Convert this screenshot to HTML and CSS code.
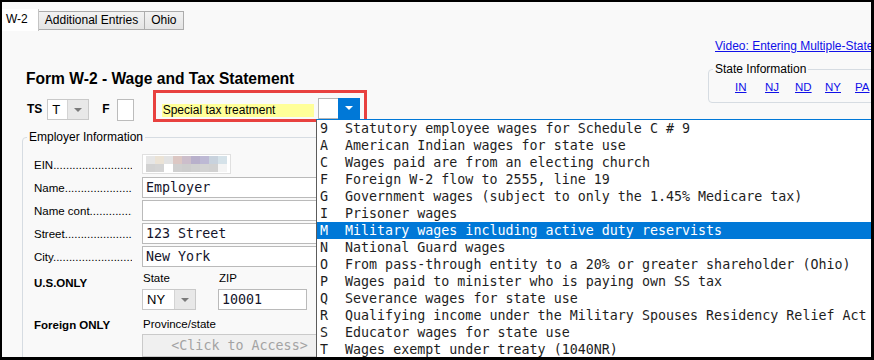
FILE: index.html
```html
<!DOCTYPE html>
<html lang="en">
<head>
  <meta charset="UTF-8" />
  <title>Form W-2 - Wage and Tax Statement</title>
  <link rel="stylesheet" href="styles.css">
</head>
<body>

  <div class="app">

    <div class="tabs">
      <div class="tab active">W-2</div>
      <div class="tab">Additional Entries</div>
      <div class="tab">Ohio</div>
    </div>

    <div class="main">
      <div class="left">
        <h1>Form W-2 - Wage and Tax Statement</h1>

        <div class="ts-row">
          <span class="bold-label">TS</span>
          <div class="select ts-select"><span class="val">T</span><span class="arrow"></span></div>
          <span class="bold-label f-label">F</span>
          <div class="f-box"></div>
          <div class="highlight">
            <span class="yellow">Special tax treatment</span>
            <div class="combo"><span class="combo-val"></span><span class="combo-btn"></span></div>
          </div>
        </div>

        <fieldset class="group employer">
          <legend>Employer Information</legend>

          <div class="row">
            <span class="lbl">EIN</span>
            <div class="ein">
              <i style="background:#e6e6e6"></i><i style="background:#ebe3d6"></i><i style="background:#e3e3e3"></i><i style="background:#dcc7c3"></i><i style="background:#ccbecb"></i><i style="background:#b8b0cb"></i><i style="background:#bdb9d4"></i><i style="background:#c8d2dd"></i><i style="background:#d5e2e9"></i>
              <i style="background:#d2d2d2"></i><i style="background:#d4d4d4"></i><i style="background:#ffffff"></i><i style="background:#cfcfcf"></i><i style="background:#cdcdcd"></i><i style="background:#d0d0d0"></i><i style="background:#d3d3d3"></i><i style="background:#d1d1d1"></i><i style="background:#f4f4f4"></i>
            </div>
          </div>
          <div class="row">
            <span class="lbl">Name</span>
            <div class="field">Employer</div>
          </div>
          <div class="row">
            <span class="lbl">Name cont</span>
            <div class="field"></div>
          </div>
          <div class="row">
            <span class="lbl">Street</span>
            <div class="field">123 Street</div>
          </div>
          <div class="row">
            <span class="lbl">City</span>
            <div class="field">New York</div>
          </div>

          <div class="us-row">
            <span class="bold-label section-label">U.S.ONLY</span>
            <div class="sub state-col">
              <span class="sub-label">State</span>
              <div class="select state-select"><span class="val">NY</span><span class="arrow"></span></div>
            </div>
            <div class="sub">
              <span class="sub-label">ZIP</span>
              <div class="field zip">10001</div>
            </div>
          </div>

          <div class="foreign-row">
            <span class="bold-label section-label">Foreign ONLY</span>
            <div class="sub">
              <span class="sub-label">Province/state</span>
              <div class="click-box">&lt;Click to Access&gt;</div>
            </div>
          </div>
        </fieldset>
      </div>

      <div class="right">
        <a class="video" href="#">Video: Entering Multiple-State Returns</a>
        <fieldset class="group states">
          <legend>State Information</legend>
          <div class="state-links">
            <a href="#">IN</a>
            <a href="#">NJ</a>
            <a href="#">ND</a>
            <a href="#">NY</a>
            <a href="#">PA</a>
          </div>
        </fieldset>
      </div>
    </div>

    <ul class="dropdown">
      <li><span class="code">9</span><span>Statutory employee wages for Schedule C # 9</span></li>
      <li><span class="code">A</span><span>American Indian wages for state use</span></li>
      <li><span class="code">C</span><span>Wages paid are from an electing church</span></li>
      <li><span class="code">F</span><span>Foreign W-2 flow to 2555, line 19</span></li>
      <li><span class="code">G</span><span>Government wages (subject to only the 1.45% Medicare tax)</span></li>
      <li><span class="code">I</span><span>Prisoner wages</span></li>
      <li class="selected"><span class="code">M</span><span>Military wages including active duty reservists</span></li>
      <li><span class="code">N</span><span>National Guard wages</span></li>
      <li><span class="code">O</span><span>From pass-through entity to a 20% or greater shareholder (Ohio)</span></li>
      <li><span class="code">P</span><span>Wages paid to minister who is paying own SS tax</span></li>
      <li><span class="code">Q</span><span>Severance wages for state use</span></li>
      <li><span class="code">R</span><span>Qualifying income under the Military Spouses Residency Relief Act</span></li>
      <li><span class="code">S</span><span>Educator wages for state use</span></li>
      <li><span class="code">T</span><span>Wages exempt under treaty (1040NR)</span></li>
    </ul>

  </div>

</body>
</html>
```

FILE: styles.css
```css
body {
  margin: 0;
  background: #000;
  height: 360px;
  overflow: hidden;
}

.app {
  position: relative;
  width: 869px;
  height: 355px;
  margin: 2px 3px 3px 2px;
  overflow: hidden;
  background: #f9f9f9;
  font-family: "Liberation Sans", Arial, sans-serif;
  font-size: 12px;
  color: #000;
}

/* tabs */

.tabs {
  display: flex;
  align-items: flex-end;
  height: 29px;
}

.tab {
  height: 17px;
  line-height: 17px;
  padding: 0 6px;
  margin-bottom: 1px;
  border: 1px solid #acacac;
  border-left: none;
  background: linear-gradient(#f2f2f2, #e4e4e4);
}

.tab.active {
  height: 22px;
  line-height: 20px;
  padding: 0 10px 0 4px;
  margin-bottom: 0;
  border: none;
  border-right: 1px solid #c4c4c4;
  background: #fff;
}

.main {
  display: flex;
}

.left {
  width: 706px;
  flex: none;
  padding-left: 20px;
  box-sizing: border-box;
}

h1 {
  margin: 39px 0 0 4px;
  font-size: 15.6px;
  line-height: 18px;
  font-weight: bold;
}

/* TS row */

.ts-row {
  display: flex;
  align-items: flex-end;
  height: 32px;
  margin: 2px 0 0 5px;
}

.bold-label {
  font-weight: bold;
  line-height: 21px;
  margin-bottom: 2px;
}

.select {
  display: flex;
  height: 21px;
  box-sizing: border-box;
  border: 1px solid #c9c9c9;
  background: #fff;
}

.select .val {
  padding-left: 4px;
  line-height: 19px;
  font-size: 13px;
}

.select .arrow {
  position: relative;
  width: 21px;
  background: #e8e8e8;
  border-left: 1px solid #d4d4d4;
}

.select .arrow::after {
  content: "";
  position: absolute;
  left: 6px;
  top: 8px;
  border: 4px solid transparent;
  border-top: 4px solid #7a7a7a;
  border-bottom: none;
}

.ts-select {
  width: 42px;
  margin: 0 0 2px 5px;
}

.ts-select .val {
  width: 16px;
}

.f-label {
  margin-left: 13px;
}

.f-box {
  width: 17px;
  height: 22px;
  box-sizing: border-box;
  margin: 0 0 1px 7px;
  border: 1px solid #bcbcbc;
  background: #fff;
}

.highlight {
  display: flex;
  align-items: flex-end;
  width: 214px;
  height: 32px;
  box-sizing: border-box;
  margin-left: 19px;
  padding: 0 4px 0 6px;
  border: 3px solid #e8413f;
}

.yellow {
  width: 152px;
  height: 13px;
  line-height: 13px;
  margin-bottom: 2px;
  padding-left: 1px;
  box-sizing: border-box;
  background: #ffff99;
}

.combo {
  display: flex;
  height: 21px;
  margin-left: 4px;
}

.combo-val {
  width: 20px;
  box-sizing: border-box;
  border: 1px solid #b5b5b5;
  border-right: none;
  background: #fff;
}

.combo-btn {
  position: relative;
  width: 22px;
  background: #0078d7;
}

.combo-btn::after {
  content: "";
  position: absolute;
  left: 7px;
  top: 8px;
  border: 4px solid transparent;
  border-top: 4px solid #fff;
  border-bottom: none;
}

/* group boxes */

.group {
  margin: 0;
  min-width: 0;
  border: 1px solid #d6dce2;
  border-radius: 4px;
}

.group legend {
  padding: 0 2px;
  line-height: 14px;
}

.employer {
  width: 420px;
  height: 260px;
  margin-top: 8px;
  padding: 10px 0 0 4px;
}

.row {
  display: flex;
  height: 23px;
  padding-left: 7px;
}

.lbl {
  width: 98px;
  margin-right: 10px;
  font-size: 11.5px;
  line-height: 22px;
  white-space: nowrap;
  overflow: hidden;
}

.lbl::after {
  content: "..............................................";
}

.field {
  width: 200px;
  height: 21px;
  box-sizing: border-box;
  padding-left: 3px;
  border: 1px solid #bababa;
  background: #fff;
  font-family: "DejaVu Sans Mono", monospace;
  font-size: 13.33px;
  line-height: 19px;
  color: #14142b;
}

.ein {
  display: grid;
  grid-template-columns: repeat(9, 9px);
  grid-auto-rows: 8px;
  width: 89px;
  height: 20px;
  box-sizing: border-box;
  padding: 1px 3px;
  border: 1px solid #e0e0e0;
  background: #fff;
}

.us-row,
.foreign-row {
  display: flex;
  padding-left: 7px;
}

.us-row {
  margin-top: 2px;
}

.foreign-row {
  margin-top: 7px;
}

.section-label {
  width: 108px;
  font-size: 11.5px;
  line-height: 14px;
  margin: 5px 0 0;
}

.foreign-row .section-label {
  margin-top: 1px;
}

.sub {
  display: flex;
  flex-direction: column;
}

.sub-label {
  line-height: 14px;
  padding-left: 1px;
  margin-bottom: 4px;
  font-size: 11.5px;
}

.foreign-row .sub-label {
  margin-bottom: 3px;
}

.state-col {
  width: 76px;
}

.state-select {
  width: 54px;
}

.state-select .val {
  width: 28px;
}

.zip {
  width: 89px;
}

.click-box {
  width: 195px;
  height: 23px;
  box-sizing: border-box;
  border: 1px solid #cacaca;
  background: #f0f0f0;
  text-align: center;
  font-family: "DejaVu Sans Mono", monospace;
  font-size: 13.33px;
  line-height: 21px;
  color: #a3a3a3;
}

/* right column */

.right {
  padding-top: 8px;
  white-space: nowrap;
}

.right a {
  color: #1010e8;
}

.video {
  display: block;
  margin-left: 7px;
  line-height: 14px;
}

.states {
  width: 200px;
  margin-top: 9px;
  padding: 4px 0 8px 4px;
}

.state-links {
  display: flex;
  padding-left: 22px;
  font-size: 11.5px;
  line-height: 14px;
}

.state-links a {
  width: 30px;
  flex: none;
}

.state-links a:last-child {
  width: auto;
}

/* open dropdown list */

.dropdown {
  position: absolute;
  left: 314px;
  top: 117px;
  width: 600px;
  height: 260px;
  margin: 0;
  padding: 0;
  list-style: none;
  background: #fff;
  border-top: 1px solid #0078d7;
  border-left: 1px solid #5c5c5c;
  font-family: "DejaVu Sans Mono", monospace;
  font-size: 13.33px;
  color: #1e1e1e;
}

.dropdown li {
  display: flex;
  height: 17px;
  line-height: 17px;
  white-space: pre;
}

.dropdown .code {
  width: 25px;
  padding-left: 3px;
  flex: none;
}

.dropdown li.selected {
  background: #0078d7;
  color: #fff;
}
```
